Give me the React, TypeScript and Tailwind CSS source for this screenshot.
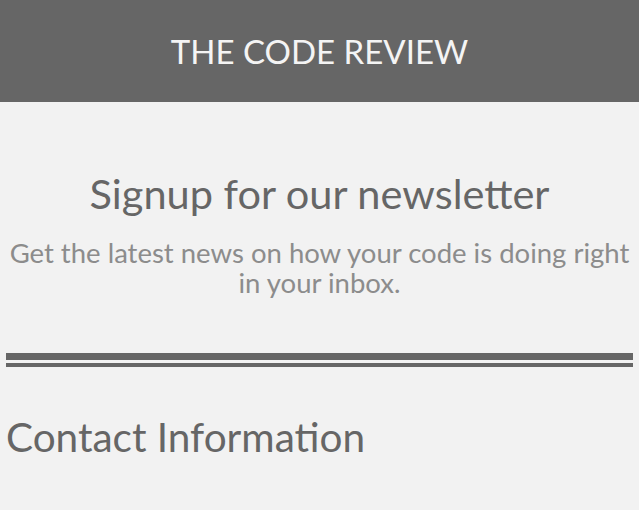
export default function App() {
  return (
    <div className="min-h-screen bg-[#f2f2f2] font-['Lato','Liberation_Sans',sans-serif]">
      <header className="h-[102px] bg-[#666666] flex items-center justify-center">
        <h1 className="text-[33px] leading-[40px] text-[#f4f4f4]">THE CODE REVIEW</h1>
      </header>

      <main className="px-[6px]">
        <section className="text-center pt-[67px]">
          <h2 className="text-[41.5px] leading-[48px] text-[#666666]">Signup for our newsletter</h2>
          <p className="mt-[21px] text-[27.5px] leading-[30px] text-[#8c8c8c]">
            Get the latest news on how your code is doing right in your inbox.
          </p>
        </section>

        <div className="mt-[55px]">
          <div className="h-[7px] bg-[#666666]" />
          <div className="mt-[3px] h-[4px] bg-[#666666]" />
        </div>

        <section className="pt-[46px]">
          <h2 className="text-[40.5px] leading-[48px] text-[#666666]">Contact Information</h2>
        </section>
      </main>
    </div>
  );
}
